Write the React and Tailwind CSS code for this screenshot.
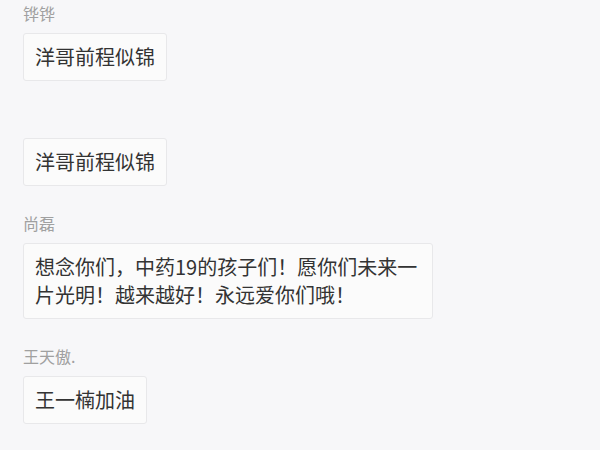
import React from 'react';

const messages = [
  { name: '铧铧', text: '洋哥前程似锦' },
  { name: '', text: '洋哥前程似锦' },
  { name: '尚磊', text: '想念你们，中药19的孩子们！愿你们未来一片光明！越来越好！永远爱你们哦！' },
  { name: '王天傲.', text: '王一楠加油' },
];

const App = () => {
  return (
    <div
      className="w-[600px] h-[450px] overflow-hidden bg-[#f7f7f9] px-[23px] pt-[3px]"
      style={{ fontFamily: '"Noto Sans CJK SC", "Noto Sans", sans-serif' }}
    >
      {messages.map((m, i) => (
        <div key={i} className="mb-[27px]">
          <div className="h-5 text-[16px] leading-5 text-[#a0a0a0] mb-[10px]">{m.name}</div>
          <div className="w-fit max-w-[410px] bg-[#fbfbfb] border border-[#e8e8ea] rounded-[3px] px-[11px] py-[9px] text-[20px] leading-[28px] text-[#333333]">
            {m.text}
          </div>
        </div>
      ))}
    </div>
  );
};

export default App;
